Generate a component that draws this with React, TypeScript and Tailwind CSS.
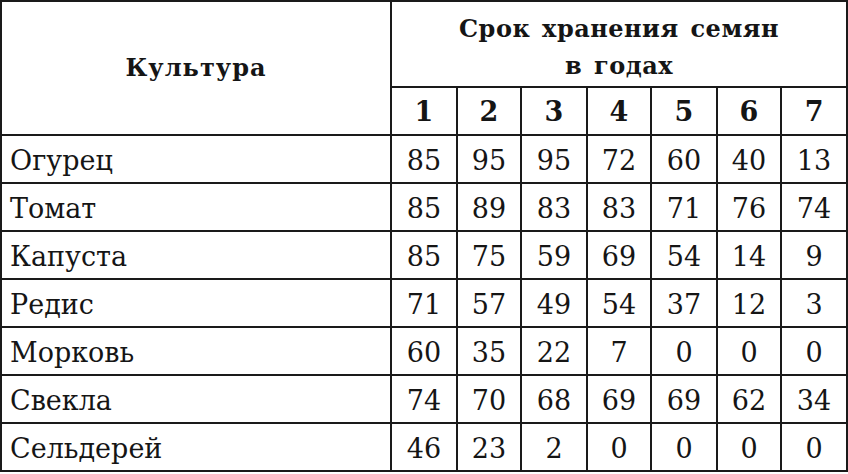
import React from 'react';

const rows: [string, (number | string)[]][] = [
  ['Огурец', [85, 95, 95, 72, 60, 40, 13]],
  ['Томат', [85, 89, 83, 83, 71, 76, 74]],
  ['Капуста', [85, 75, 59, 69, 54, 14, 9]],
  ['Редис', [71, 57, 49, 54, 37, 12, 3]],
  ['Морковь', [60, 35, 22, 7, 0, 0, 0]],
  ['Свекла', [74, 70, 68, 69, 69, 62, 34]],
  ['Сельдерей', [46, 23, 2, 0, 0, 0, 0]],
];

const years = [1, 2, 3, 4, 5, 6, 7];
const colW = [66, 64, 66, 64, 66, 64, 66];

const App = () => {
  return (
    <div className="w-[848px] h-[474px] bg-white overflow-hidden font-['DejaVu_Serif',serif] text-[#151515]">
      <table className="table-fixed border-collapse w-[848px] border-2 border-[#1a1a1a]">
        <colgroup>
          <col className="w-[390px]" />
          {colW.map((w, i) => (
            <col key={i} style={{ width: w }} />
          ))}
        </colgroup>
        <thead>
          <tr className="h-[86px]">
            <th rowSpan={2} className="border-2 border-[#1a1a1a] text-[24px] font-bold tracking-[1px] text-center align-middle">
              Культура
            </th>
            <th colSpan={7} className="border-2 border-[#1a1a1a] text-[24px] font-bold tracking-[0.5px] [word-spacing:3px] leading-[37px] pt-[6px] text-center align-middle">
              Срок хранения семян
              <br />
              в годах
            </th>
          </tr>
          <tr className="h-[48px]">
            {years.map((y) => (
              <th key={y} className="border-2 border-[#1a1a1a] text-[27px] font-bold text-center align-middle pt-[2px]">
                {y}
              </th>
            ))}
          </tr>
        </thead>
        <tbody>
          {rows.map(([name, vals]) => (
            <tr key={name} className="h-[48px]">
              <td className="border-2 border-[#1a1a1a] pl-[8px] text-[27px] text-left align-middle pt-[5px]">{name}</td>
              {vals.map((v, i) => (
                <td key={i} className="border-2 border-[#1a1a1a] text-[27px] text-center align-middle pt-[5px]">
                  {v}
                </td>
              ))}
            </tr>
          ))}
        </tbody>
      </table>
    </div>
  );
};

export default App;
